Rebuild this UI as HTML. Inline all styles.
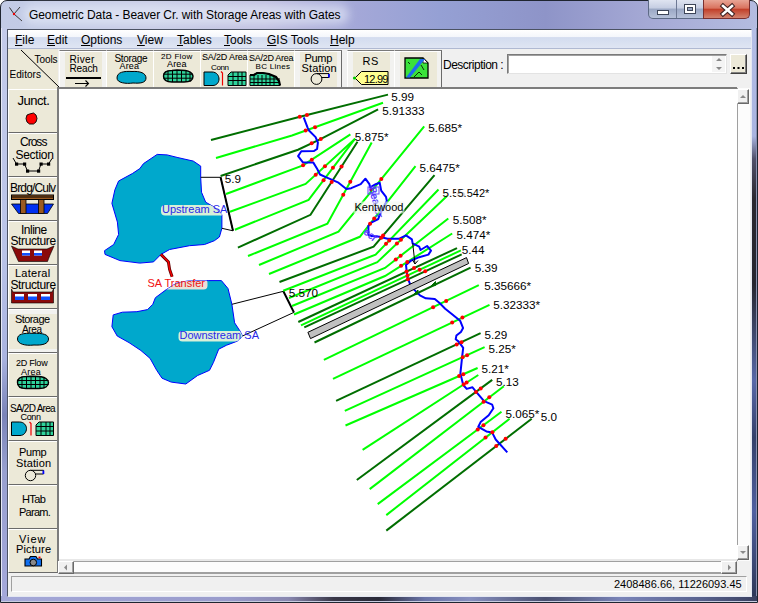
<!DOCTYPE html>
<html><head><meta charset="utf-8">
<style>
*{margin:0;padding:0;box-sizing:border-box}
html,body{width:758px;height:603px;overflow:hidden;background:#fff}
body{font-family:"Liberation Sans",sans-serif;position:relative}
.a{position:absolute}
#win{left:0;top:0;width:758px;height:603px;border:1px solid #1f2530;border-radius:7px 7px 0 0;
 background:linear-gradient(90deg,#c2cbe6 0%,#c8cde6 20%,#c0c0e0 35%,#a4a8d8 47%,#95a0d4 58%,#8e94c8 72%,#a4a8d4 85%,#b4bce0 100%);}
#title{left:29px;top:8px;letter-spacing:-0.07px;font-size:12px;color:#000;white-space:nowrap}
#client{left:7px;top:29px;width:745px;height:568px;background:#f0f0f0;border:1px solid #4b5263;border-bottom-color:#e4e8f2;border-right-color:#e4e8f2}
#menu{left:8px;top:30px;width:743px;height:19px;background:linear-gradient(#ffffff 0%,#f4f6fb 38%,#d3dcef 42%,#dfe5f3 100%);border-bottom:1px solid #b0b9d2}
.mi{position:absolute;top:33px;font-size:12px;color:#000}
#tbl{left:8px;top:49px;width:50px;height:39px;background:#ece9d8}
.tbtn{position:absolute;top:50px;height:38px;background:#ece9d8;border-top:1px solid #7a7a7a;border-left:1px solid #fff;border-right:1px solid #6a6a6a;border-bottom:1px solid #5a5a5a;box-shadow:inset 0 1px 0 #fff}
.lbtn{position:absolute;left:8px;width:50px;height:44px;background:#ece9d8;border-top:1px solid #fff;border-left:1px solid #fff;border-right:1px solid #7a7a7a;border-bottom:1px solid #6a6a6a}
.t{position:absolute;font-size:10px;line-height:10px;color:#000;white-space:nowrap;-webkit-text-stroke:0.05px #000}
.ic{position:absolute;overflow:visible}
#canvas{left:57px;top:87px;width:680px;height:473px;background:#fff;border-top:2px solid #7c7c7c;border-left:2px solid #7c7c7c}
</style></head><body>
<div id="win" class="a"></div>
<div class="a" style="left:1px;top:28px;width:6px;height:569px;background:linear-gradient(#c4cbea 0%,#b9c3e8 40%,#a9b3e0 58%,#7a84b8 68%,#98a0d0 78%,#a4a8da 100%);border-left:1px solid #e6e9f6"></div>
<div class="a" style="left:751px;top:28px;width:6px;height:569px;background:linear-gradient(#b4bee6 0%,#a9b4e0 19%,#50506a 23%,#2a2830 30%,#262630 45%,#3a4260 52%,#5868a8 62%,#34406a 72%,#5060a0 85%,#2e3858 100%);border-right:1px solid #8890b0"></div>
<div class="a" style="left:1px;top:596px;width:756px;height:6px;background:linear-gradient(90deg,#a4a8d8 0%,#9a9ccc 30%,#8a88b0 38%,#3a3848 44%,#2a2a38 50%,#6a74a8 56%,#8890c0 62%,#4a5070 72%,#7a84b8 82%,#5a6490 92%,#3a4060 100%);border-bottom:1px solid #c8cce0"></div>
<svg class="ic" style="left:8px;top:6px" width="16" height="16"><path d="M1.5 1.5 L6 8 L14 15 M12 1 L6 8" stroke="#333" stroke-width="1" fill="none"/><circle cx="6" cy="8" r="1.2" fill="#e00"/></svg>
<div class="a" style="left:24px;top:5px;width:325px;height:19px;background:rgba(235,240,252,0.55);filter:blur(4px);border-radius:9px"></div>
<div id="title" class="a">Geometric Data - Beaver Cr. with Storage Areas with Gates</div>
<!-- caption buttons -->
<div class="a" style="left:648px;top:0;width:56px;height:19px;border:1px solid #5d6a86;border-top:none;border-radius:0 0 0 5px;background:linear-gradient(#dfe4f1,#c5cde2 45%,#9aa7c4 50%,#b6c1d9 100%)"></div>
<div class="a" style="left:676px;top:0;width:1px;height:18px;background:#6d7894"></div>
<div class="a" style="left:657px;top:10px;width:12px;height:5px;background:#fff;border:1px solid #3d4558"></div>
<div class="a" style="left:684px;top:4px;width:12px;height:10px;background:#fff;border:1px solid #3d4558"></div>
<div class="a" style="left:687px;top:7px;width:6px;height:4px;background:#9aa7c4;border:1px solid #3d4558"></div>
<div class="a" style="left:703px;top:0;width:47px;height:19px;border:1px solid #7a3030;border-top:none;border-radius:0 0 5px 0;background:linear-gradient(#e8a595,#d9735f 45%,#c2402a 52%,#d3836f 100%)"></div>
<svg class="ic" style="left:720px;top:4px" width="15" height="12"><path d="M3 2 L12 10 M12 2 L3 10" stroke="#3d2020" stroke-width="4.6" stroke-linecap="square"/><path d="M3 2 L12 10 M12 2 L3 10" stroke="#fff" stroke-width="2.6" stroke-linecap="square"/></svg>

<div id="client" class="a"></div>
<div id="menu" class="a"></div>
<div class="mi" style="left:15px"><u>F</u>ile</div>
<div class="mi" style="left:47px"><u>E</u>dit</div>
<div class="mi" style="left:81px"><u>O</u>ptions</div>
<div class="mi" style="left:137px"><u>V</u>iew</div>
<div class="mi" style="left:177px"><u>T</u>ables</div>
<div class="mi" style="left:224px"><u>T</u>ools</div>
<div class="mi" style="left:267px"><u>G</u>IS Tools</div>
<div class="mi" style="left:330px"><u>H</u>elp</div>

<div id="tbl" class="a"></div>
<svg class="ic" style="left:8px;top:49px" width="52" height="40"><line x1="13" y1="1" x2="51" y2="38" stroke="#000" stroke-width="1"/></svg>
<!-- top toolbar buttons -->
<div class="tbtn" style="left:59px;width:48px;background:linear-gradient(90deg,#f2f2f0 0,#f2f2f0 5px,#ece9d8 5px,#ece9d8 42px,#f2f2f0 42px)"></div>
<svg class="ic" style="left:59px;top:50px" width="48" height="38"><rect x="7" y="27" width="35" height="2" fill="#000"/><path d="M16 33.5 H29.5 M26.5 30.5 L29.5 33.5 L26.5 36.5" stroke="#000" stroke-width="1.1" fill="none"/></svg>

<div class="tbtn" style="left:106px;width:48px"></div>
<svg class="ic" style="left:106px;top:50px" width="48" height="38"><path d="M11 28 C11 22,18 21,26 21.5 C34 21,40 23,40 28 C40 33,34 33.5,27 33 C20 34,11 33,11 28Z" fill="#00a8cc" stroke="#000" stroke-width="1"/></svg>

<div class="tbtn" style="left:153px;width:48px"></div>
<svg class="ic" style="left:153px;top:50px" width="48" height="38" id="g2d"><path d="M10.5 26 C10.5 22,14 20.5,19 20.5 L24 20 C30 20,34 20,37 22 C39.5 23.5,40 25,40 26.5 C40 30,37 32,31 32 L19 32 C13 32,10.5 30,10.5 26Z" fill="#2fd39b" stroke="#000" stroke-width="1.4"/><path d="M10.5 24.2H40 M10.5 28.2H40 M15 20.5V32 M19.5 20.5V32 M24 20V32 M28.5 20V32 M33 20V32 M37 21.5V32" stroke="#000" stroke-width="1"/></svg>

<div class="tbtn" style="left:200px;width:48px"></div>
<svg class="ic" style="left:200px;top:50px" width="48" height="38"><path d="M4 22 H12 C17 22,19 26,19 29 C19 33,16 35.5,13 35.5 H4Z" fill="#00a8cc" stroke="#000" stroke-width="1"/><path d="M21 21.5 L22.5 23 V35.5" stroke="#e00" stroke-width="1.2" fill="none"/><path d="M31 22 H46 V35.5 H28 V25Z" fill="#2fd39b" stroke="#000" stroke-width="1"/><path d="M28 26.5H46 M28 30.5H46 M33 22V35.5 M38 22V35.5 M42 22V35.5" stroke="#000" stroke-width="1"/></svg>

<div class="tbtn" style="left:247px;width:48px"></div>
<svg class="ic" style="left:247px;top:50px" width="48" height="38"><path d="M3 25 H7 L10 23 H16 L22 24 L29 27 L32 31 L33 35.5 H3Z" fill="#2fd39b" stroke="#000" stroke-width="1"/><path d="M3 25 H7 L10 23 H16 L22 24 L29 27 L32 31 L33 35.5" stroke="#000" stroke-width="2.2" fill="none"/><path d="M3 29H33 M3 32.5H33 M7 25V35.5 M11 25V35.5 M15 25V35.5 M19 25V35.5 M23 25V35.5 M27 27V35.5" stroke="#000" stroke-width="1"/></svg>

<div class="tbtn" style="left:294px;width:48px;background:linear-gradient(90deg,#f2f2f0 0,#f2f2f0 5px,#ece9d8 5px,#ece9d8 42px,#f2f2f0 42px)"></div>
<svg class="ic" style="left:294px;top:50px" width="48" height="38"><circle cx="22.5" cy="29" r="5.4" fill="none" stroke="#000" stroke-width="1"/><path d="M22.5 23.6 H35 V27.5 H27.5" fill="none" stroke="#000" stroke-width="1"/><rect x="34" y="24" width="1.8" height="3.5" fill="#00f"/></svg>

<div class="tbtn" style="left:347px;width:48px;background:linear-gradient(90deg,#f2f2f0 0,#f2f2f0 5px,#ece9d8 5px,#ece9d8 42px,#f2f2f0 42px)"></div>
<svg class="ic" style="left:347px;top:50px" width="48" height="38"><path d="M8 28 L14.5 21.5 H41 V34.5 H14.5Z" fill="#ffff90" stroke="#000" stroke-width="1"/><circle cx="7.5" cy="28" r="1.6" fill="#0c0"/><text x="17" y="33" font-family="Liberation Sans" font-size="11" letter-spacing="-0.8">12.99</text></svg>

<div class="tbtn" style="left:394px;width:48px;background:linear-gradient(90deg,#f2f2f0 0,#f2f2f0 5px,#ece9d8 5px,#ece9d8 42px,#f2f2f0 42px)"></div>
<svg class="ic" style="left:394px;top:50px" width="48" height="38"><path d="M11 8 H29 L34 13 V28 H11Z" fill="#3be23b" stroke="#000" stroke-width="1.3"/><path d="M29 8 V13 H34Z" fill="#fff" stroke="#000" stroke-width="0.8"/><path d="M12 27.5 L26 9 H31 L16 27.5Z" fill="#1e6cf0"/><path d="M20 27 L25 22 L28 25 M27 15 L30 20 M14 12 L16 14" stroke="#000" stroke-width="0.8" fill="none"/></svg>

<div class="a" style="left:443px;top:58px;font-size:12px;letter-spacing:-0.5px;white-space:nowrap">Description <span style="letter-spacing:0">:</span></div>
<div class="a" style="left:507px;top:54px;width:220px;height:20px;background:#fff;border:1px solid;border-color:#7a7a7a #e3e3e3 #e3e3e3 #7a7a7a;box-shadow:inset 1px 1px 0 #a0a0a0"></div>
<div class="a" style="left:712px;top:56px;width:13px;height:16px;background:#f4f4f4"></div>
<svg class="ic" style="left:712px;top:55px" width="14" height="18"><path d="M4 6 L7 3 L10 6Z M4 12 L7 15 L10 12Z" fill="#888"/></svg>
<div class="a" style="left:730px;top:54px;width:17px;height:20px;background:#ece9d8;border:1px solid;border-color:#fff #404040 #404040 #fff;box-shadow:inset -1px -1px 0 #808080"></div>
<svg class="ic" style="left:730px;top:54px" width="17" height="20"><rect x="3" y="13" width="2" height="2" fill="#000"/><rect x="7.5" y="13" width="2" height="2" fill="#000"/><rect x="12" y="13" width="2" height="2" fill="#000"/></svg>
<!-- left toolbar -->
<div class="a" style="left:8px;top:88px;width:50px;height:485px;background:#ece9d8"></div>
<div class="a" style="left:57px;top:88px;width:2px;height:485px;background:#7a7a7a"></div><div class="a" style="left:8px;top:572px;width:51px;height:1px;background:#6a6a6a"></div>
<div class="lbtn" style="top:89px"></div>
<svg class="ic" style="left:8px;top:89px" width="50" height="44"><path d="M21.5 25 L25.5 24 L28 26 L29 29.5 L28 33 L25.5 35 L21.5 35 L19 33 L18 29.5 L19 26Z" fill="#f00" stroke="#000" stroke-width="0.9"/></svg>

<div class="lbtn" style="top:133px"></div>
<svg class="ic" style="left:8px;top:133px" width="50" height="44"><path d="M5 25 L8.5 31 L16.5 31 L19.5 38 L30.5 38 L33 31 L40.5 31 L44 25.5" stroke="#000" stroke-width="1" fill="none"/><g fill="#000"><rect x="7" y="29.5" width="3.2" height="3.2"/><rect x="15" y="29.5" width="3.2" height="3.2"/><rect x="18" y="36.5" width="3.2" height="3.2"/><rect x="29" y="36.5" width="3.2" height="3.2"/><rect x="31.5" y="29.5" width="3.2" height="3.2"/><rect x="39" y="29.5" width="3.2" height="3.2"/></g></svg>

<div class="lbtn" style="top:177px"></div>
<svg class="ic" style="left:8px;top:177px" width="50" height="44"><path d="M3.5 27 H45.5 L39.5 36.5 H10.5Z" fill="#0030f0" stroke="#000" stroke-width="0.8"/><rect x="3.5" y="18" width="42" height="4.5" fill="#9a5a20" stroke="#000" stroke-width="1"/><line x1="3.5" y1="20" x2="45.5" y2="20" stroke="#000" stroke-width="1"/><rect x="12.5" y="22.5" width="5.5" height="14" fill="#9a5a20" stroke="#000" stroke-width="0.8"/><rect x="30.5" y="22.5" width="5.5" height="14" fill="#9a5a20" stroke="#000" stroke-width="0.8"/></svg>

<div class="lbtn" style="top:221px"></div>
<svg class="ic" style="left:8px;top:221px" width="50" height="44"><path d="M3.5 25 L10 28 H39 L46 25 L42 34 L39.5 40.5 H10.5 L7.5 34Z" fill="#8a0a0a" stroke="#000" stroke-width="0.6"/><rect x="14" y="29.5" width="8" height="5" fill="#fff"/><rect x="14" y="32" width="8" height="2.5" fill="#1050ff"/><rect x="26" y="29.5" width="8" height="5" fill="#fff"/><rect x="26" y="32" width="8" height="2.5" fill="#1050ff"/></svg>

<div class="lbtn" style="top:265px"></div>
<svg class="ic" style="left:8px;top:265px" width="50" height="44"><path d="M3.5 24 V38 H45.5 V24 L44 27 H5Z" fill="#8a0a0a" stroke="#000" stroke-width="0.6"/><rect x="7" y="29" width="9" height="6" fill="#fff"/><rect x="7" y="31.5" width="9" height="3.5" fill="#1050ff"/><rect x="20" y="29" width="9" height="6" fill="#fff"/><rect x="20" y="31.5" width="9" height="3.5" fill="#1050ff"/><rect x="33" y="29" width="9" height="6" fill="#fff"/><rect x="33" y="31.5" width="9" height="3.5" fill="#1050ff"/></svg>

<div class="lbtn" style="top:309px;background:linear-gradient(#f2f2f0 0,#f2f2f0 4px,#ece9d8 4px,#ece9d8 39px,#f2f2f0 39px)"></div>
<svg class="ic" style="left:8px;top:309px" width="50" height="44"><path d="M9.5 30 C9.5 25,15 24,25 24.3 C35 24,40.5 25.5,40.5 30 C40.5 35,34 36.5,26 36 C17 37,9.5 35,9.5 30Z" fill="#00a8cc" stroke="#000" stroke-width="1"/></svg>

<div class="lbtn" style="top:353px"></div>
<svg class="ic" style="left:8px;top:353px" width="50" height="44"><path d="M9.5 29.5 C9.5 25.5,13 23.5,18 23.5 L25 23.3 C31 23.3,35 23.5,38 25.5 C40 27,40.5 28,40.5 29.5 C40.5 33,37 35.5,31 35.5 L18 35.5 C12 35.5,9.5 33.5,9.5 29.5Z" fill="#2fd39b" stroke="#000" stroke-width="1.4"/><path d="M9.5 27.5H40.5 M9.5 31.5H40.5 M14 23.5V35.5 M18.5 23.5V35.5 M23 23.3V35.5 M27.5 23.3V35.5 M32 23.3V35.5 M36 24.5V35.5" stroke="#000" stroke-width="1"/></svg>

<div class="lbtn" style="top:397px"></div>
<svg class="ic" style="left:8px;top:397px" width="50" height="44"><path d="M3.5 25 H11.5 C16 25,18.5 28.5,18.5 31.5 C18.5 35,16 38.5,12 38.5 H3.5Z" fill="#00a8cc" stroke="#000" stroke-width="1"/><path d="M21.5 25 L23 26.5 V38.5" stroke="#e00" stroke-width="1.2" fill="none"/><path d="M31 25 H45.5 V38.5 H28 V28Z" fill="#2fd39b" stroke="#000" stroke-width="1"/><path d="M28 29.5H45.5 M28 34H45.5 M33 25V38.5 M38 25V38.5 M42 25V38.5" stroke="#000" stroke-width="1"/></svg>

<div class="lbtn" style="top:441px"></div>
<svg class="ic" style="left:8px;top:441px" width="50" height="44"><circle cx="22.5" cy="34.5" r="5.2" fill="none" stroke="#000" stroke-width="1"/><path d="M22.5 29.3 H35.5 V33 H27.3" fill="none" stroke="#000" stroke-width="1"/><rect x="34.5" y="29.5" width="1.8" height="3.5" fill="#00f"/></svg>

<div class="lbtn" style="top:485px"></div>

<div class="lbtn" style="top:529px"></div>
<svg class="ic" style="left:8px;top:529px" width="50" height="44"><path d="M17 30 H21 L22.5 27.5 H28 L29.5 30 H33.5 V37 H17Z" fill="#1070f0" stroke="#000" stroke-width="1.1"/><circle cx="25.3" cy="33.5" r="3.3" fill="#888" stroke="#000" stroke-width="1"/><rect x="30.5" y="27.6" width="2" height="1.6" fill="#f00"/></svg>
<!-- canvas & scrollbars -->
<div id="canvas" class="a"></div>
<div class="a" style="left:737px;top:88px;width:13px;height:473px;background:#fcfcfc;border-left:1px solid #a0a0a0"></div>
<div class="a" style="left:737px;top:89px;width:12px;height:15px;background:#f0f0f0;border:1px solid;border-color:#fff #696969 #696969 #fff;box-shadow:inset -1px -1px 0 #a0a0a0"></div>
<svg class="ic" style="left:737px;top:89px" width="12" height="15"><path d="M3 9 L6 6 L9 9Z" fill="#8a8a8a"/></svg>
<div class="a" style="left:737px;top:545px;width:12px;height:15px;background:#f0f0f0;border:1px solid;border-color:#fff #696969 #696969 #fff;box-shadow:inset -1px -1px 0 #a0a0a0"></div>
<svg class="ic" style="left:737px;top:545px" width="12" height="15"><path d="M3 6 L6 9 L9 6Z" fill="#8a8a8a"/></svg>
<div class="a" style="left:59px;top:559px;width:678px;height:15px;background:#fcfcfc;border-top:2px solid #e8e8e8;border-bottom:2px solid #a0a0a0;box-shadow:inset 0 1px 0 #a0a0a0"></div>
<div class="a" style="left:58px;top:561px;width:16px;height:13px;background:#f0f0f0;border:1px solid;border-color:#fff #696969 #696969 #fff;box-shadow:inset -1px -1px 0 #a0a0a0"></div>
<svg class="ic" style="left:58px;top:561px" width="16" height="13"><path d="M9 3.5 L6 6.5 L9 9.5Z" fill="#8a8a8a"/></svg>
<div class="a" style="left:721px;top:561px;width:16px;height:13px;background:#f0f0f0;border:1px solid;border-color:#fff #696969 #696969 #fff;box-shadow:inset -1px -1px 0 #a0a0a0"></div>
<svg class="ic" style="left:721px;top:561px" width="16" height="13"><path d="M7 3.5 L10 6.5 L7 9.5Z" fill="#8a8a8a"/></svg>
<div class="a" style="left:737px;top:561px;width:13px;height:13px;background:#f0f0f0"></div>
<div class="a" style="left:8px;top:574px;width:742px;height:22px;background:#f0f0f0"></div>
<div class="a" style="left:11px;top:576px;width:736px;height:16px;border:1px solid;border-color:#a0a0a0 #fff #fff #a0a0a0;background:#f0f0f0"></div>
<div class="a" style="left:614px;top:578px;font-size:11px;white-space:nowrap">2408486.66, 11226093.45</div>

<div class="t" style="left:17.5px;top:93.5px;font-size:13px;line-height:13px;letter-spacing:-0.46px">Junct.</div>
<div class="t" style="left:20.0px;top:136.0px;font-size:12px;line-height:12px;letter-spacing:-0.99px">Cross</div>
<div class="t" style="left:15.5px;top:148.5px;font-size:12px;line-height:12px;letter-spacing:-0.28px">Section</div>
<div class="t" style="left:10.0px;top:182.0px;font-size:12px;line-height:12px;letter-spacing:-0.83px">Brdg/Culv</div>
<div class="t" style="left:21.0px;top:223.5px;font-size:12px;line-height:12px;letter-spacing:-0.5px">Inline</div>
<div class="t" style="left:10.5px;top:234.5px;font-size:12px;line-height:12px;letter-spacing:-0.38px">Structure</div>
<div class="t" style="left:15.0px;top:268.0px;font-size:11px;line-height:11px;letter-spacing:0.25px">Lateral</div>
<div class="t" style="left:10.5px;top:278.5px;font-size:12px;line-height:12px;letter-spacing:-0.38px">Structure</div>
<div class="t" style="left:15.0px;top:314.0px;font-size:11px;line-height:11px;letter-spacing:-0.58px">Storage</div>
<div class="t" style="left:22.0px;top:324.5px;font-size:10px;line-height:10px;letter-spacing:-0.33px">Area</div>
<div class="t" style="left:16.0px;top:359.0px;font-size:9px;line-height:9px;letter-spacing:-0.23px">2D Flow</div>
<div class="t" style="left:21.0px;top:367.5px;font-size:9px;line-height:9px;letter-spacing:0.24px">Area</div>
<div class="t" style="left:10.0px;top:403.5px;font-size:10px;line-height:10px;letter-spacing:-0.75px">SA/2D Area</div>
<div class="t" style="left:20.5px;top:413.0px;font-size:9px;line-height:9px;letter-spacing:-0.33px">Conn</div>
<div class="t" style="left:19.0px;top:446.5px;font-size:11px;line-height:11px;letter-spacing:-0.39px">Pump</div>
<div class="t" style="left:16.0px;top:457.5px;font-size:11px;line-height:11px;letter-spacing:0.13px">Station</div>
<div class="t" style="left:22.0px;top:494.0px;font-size:11px;line-height:11px;letter-spacing:-0.57px">HTab</div>
<div class="t" style="left:19.0px;top:507.0px;font-size:11px;line-height:11px;letter-spacing:-0.72px">Param.</div>
<div class="t" style="left:19.0px;top:533.5px;font-size:11px;line-height:11px;letter-spacing:0.94px">View</div>
<div class="t" style="left:16.0px;top:544.0px;font-size:11px;line-height:11px;letter-spacing:0.13px">Picture</div>
<div class="t" style="left:69.5px;top:55.0px;font-size:10px;line-height:10px;letter-spacing:0.39px">River</div>
<div class="t" style="left:69.5px;top:64.0px;font-size:10px;line-height:10px;letter-spacing:-0.15px">Reach</div>
<div class="t" style="left:114.5px;top:53.5px;font-size:10px;line-height:10px;letter-spacing:-0.33px">Storage</div>
<div class="t" style="left:119.5px;top:62.0px;font-size:9px;line-height:9px;letter-spacing:0.16px">Area</div>
<div class="t" style="left:161.0px;top:52.5px;font-size:8px;line-height:8px;letter-spacing:0.31px">2D Flow</div>
<div class="t" style="left:167.0px;top:60.0px;font-size:9px;line-height:9px;letter-spacing:0.13px">Area</div>
<div class="t" style="left:202.0px;top:52.5px;font-size:9px;line-height:9px;letter-spacing:-0.16px">SA/2D Area</div>
<div class="t" style="left:211.0px;top:63.5px;font-size:8px;line-height:8px;letter-spacing:-0.4px">Conn</div>
<div class="t" style="left:249.0px;top:53.5px;font-size:9px;line-height:9px;letter-spacing:-0.28px">SA/2D Area</div>
<div class="t" style="left:255.5px;top:63.0px;font-size:8px;line-height:8px;letter-spacing:0.3px">BC Lines</div>
<div class="t" style="left:304.5px;top:52.5px;font-size:11px;line-height:11px;letter-spacing:-0.3px">Pump</div>
<div class="t" style="left:301.5px;top:63.0px;font-size:11px;line-height:11px;letter-spacing:0.15px">Station</div>
<div class="t" style="left:362.5px;top:56.0px;font-size:11px;line-height:11px;letter-spacing:0.6px">RS</div>
<div class="t" style="left:34.5px;top:54.5px;font-size:10px;line-height:10px;letter-spacing:-0.06px">Tools</div>
<div class="t" style="left:9.5px;top:70.0px;font-size:10px;line-height:10px;letter-spacing:0.06px">Editors</div>
<svg class="ic" style="left:59px;top:89px" width="678" height="471" viewBox="59 89 678 471">
<defs><clipPath id="cup"><polygon points="157.2,154.4 167.1,154.9 177.1,157.4 193.3,161.1 200.7,166.1 200.7,177.3 201.5,192.2 205.7,202.2 214.4,207.2 221.9,214.6 221.9,228.3 219.4,237.0 214.4,240.7 204.5,244.5 189.5,245.7 169.6,249.5 160.9,254.4 153.5,261.9 139.8,263.1 119.9,260.6 105.0,254.4 104.5,250.7 113.7,244.5 118.6,234.5 117.4,222.1 111.9,203.4 114.9,189.8 118.6,181.0 132.3,173.6 139.8,168.6 143.5,163.6"/></clipPath><clipPath id="cdn"><polygon points="208.2,280.6 221.4,280.6 228.0,288.5 231.9,304.3 234.6,322.8 239.8,330.7 242.5,336.0 237.2,341.2 226.6,345.2 218.7,349.2 213.5,362.3 209.5,370.3 197.6,375.5 185.8,384.0 171.2,382.1 162.0,378.2 156.7,370.3 150.1,358.4 140.9,350.5 129.0,342.6 117.2,336.0 111.9,326.7 113.2,314.9 122.4,312.2 136.9,311.7 147.5,309.6 152.8,304.3 155.4,297.7 166.0,289.8 176.5,283.2 187.1,281.1"/></clipPath></defs>
<polygon points="157.2,154.4 167.1,154.9 177.1,157.4 193.3,161.1 200.7,166.1 200.7,177.3 201.5,192.2 205.7,202.2 214.4,207.2 221.9,214.6 221.9,228.3 219.4,237.0 214.4,240.7 204.5,244.5 189.5,245.7 169.6,249.5 160.9,254.4 153.5,261.9 139.8,263.1 119.9,260.6 105.0,254.4 104.5,250.7 113.7,244.5 118.6,234.5 117.4,222.1 111.9,203.4 114.9,189.8 118.6,181.0 132.3,173.6 139.8,168.6 143.5,163.6" fill="#00a8cc" stroke="#0000ff" stroke-width="1"/>
<polygon points="208.2,280.6 221.4,280.6 228.0,288.5 231.9,304.3 234.6,322.8 239.8,330.7 242.5,336.0 237.2,341.2 226.6,345.2 218.7,349.2 213.5,362.3 209.5,370.3 197.6,375.5 185.8,384.0 171.2,382.1 162.0,378.2 156.7,370.3 150.1,358.4 140.9,350.5 129.0,342.6 117.2,336.0 111.9,326.7 113.2,314.9 122.4,312.2 136.9,311.7 147.5,309.6 152.8,304.3 155.4,297.7 166.0,289.8 176.5,283.2 187.1,281.1" fill="#00a8cc" stroke="#0000ff" stroke-width="1"/>
<path d="M200.7 177.3 H220.6 L233 230.8 L221.9 228.3" fill="none" stroke="#000" stroke-width="1"/>
<path d="M220.6 177.3 L233 230.8" fill="none" stroke="#000" stroke-width="2"/>
<path d="M231.9 304.3 L283.4 291.3 L293.9 312.4 L242.5 336" fill="none" stroke="#000" stroke-width="1"/>
<path d="M283.4 291.3 L293.9 312.4" fill="none" stroke="#000" stroke-width="2"/>
<polyline points="160.9,254.4 168.4,261.9 169.6,269.4 172.1,276.8" fill="none" stroke="#600" stroke-width="3"/>
<polyline points="160.9,254.4 168.4,261.9 169.6,269.4 172.1,276.8" fill="none" stroke="#f00" stroke-width="1.3"/>
<polyline points="211.0,140.0 300.0,116.8 388.0,94.6" fill="none" stroke="#006e00" stroke-width="2"/>
<polyline points="216.0,158.0 292.0,135.5 383.0,102.7" fill="none" stroke="#00ff00" stroke-width="2"/>
<polyline points="220.6,176.0 298.0,149.7 320.0,139.4 378.1,109.4" fill="none" stroke="#006e00" stroke-width="2"/>
<polyline points="226.0,194.0 303.0,165.4 350.4,134.4" fill="none" stroke="#00ff00" stroke-width="2"/>
<polyline points="230.0,211.8 305.6,183.9 355.1,138.7" fill="none" stroke="#00ff00" stroke-width="2"/>
<polyline points="234.9,229.7 308.6,199.9 355.1,138.7" fill="none" stroke="#00ff00" stroke-width="2"/>
<polyline points="237.9,247.6 310.5,214.8 357.5,141.8" fill="none" stroke="#006e00" stroke-width="2"/>
<polyline points="248.0,256.0 327.4,223.8 371.7,142.6" fill="none" stroke="#00ff00" stroke-width="2"/>
<polyline points="259.0,265.0 338.5,231.7 424.2,126.3" fill="none" stroke="#00ff00" stroke-width="2"/>
<polyline points="269.0,274.0 359.8,236.8 415.5,166.2" fill="none" stroke="#00ff00" stroke-width="2"/>
<polyline points="279.5,282.0 373.6,246.7 434.5,175.2" fill="none" stroke="#006e00" stroke-width="2"/>
<polyline points="283.2,290.8 375.6,254.6 438.5,189.5" fill="none" stroke="#00ff00" stroke-width="2"/>
<polyline points="289.0,298.0 377.3,262.2 447.0,196.0" fill="none" stroke="#00ff00" stroke-width="2"/>
<polyline points="292.0,306.0 385.0,268.0 448.3,218.5" fill="none" stroke="#00ff00" stroke-width="2"/>
<polyline points="294.0,314.5 385.0,276.0 452.2,233.5" fill="none" stroke="#00ff00" stroke-width="2"/>
<polyline points="298.3,322.0 457.0,248.1" fill="none" stroke="#006e00" stroke-width="2"/>
<polyline points="301.0,325.3 460.9,250.4" fill="none" stroke="#00ff00" stroke-width="2"/>
<polyline points="304.3,327.4 461.7,254.4" fill="none" stroke="#006e00" stroke-width="2"/>
<polyline points="314.5,342.5 470.6,267.7" fill="none" stroke="#006e00" stroke-width="2"/>
<polyline points="323.9,359.8 478.8,285.2" fill="none" stroke="#00ff00" stroke-width="2"/>
<polyline points="333.0,378.8 489.5,304.8" fill="none" stroke="#00ff00" stroke-width="2"/>
<polyline points="336.1,400.9 480.6,333.2" fill="none" stroke="#006e00" stroke-width="2"/>
<polyline points="344.8,410.9 484.6,347.2" fill="none" stroke="#00ff00" stroke-width="2"/>
<polyline points="345.5,425.5 477.6,368.0" fill="none" stroke="#00ff00" stroke-width="2"/>
<polyline points="362.6,449.9 478.3,375.0" fill="none" stroke="#00ff00" stroke-width="2"/>
<polyline points="356.8,480.0 492.2,379.9" fill="none" stroke="#006e00" stroke-width="2"/>
<polyline points="369.7,489.1 503.8,386.2" fill="none" stroke="#00ff00" stroke-width="2"/>
<polyline points="377.7,504.1 501.5,411.7" fill="none" stroke="#00ff00" stroke-width="2"/>
<polyline points="386.3,515.1 509.6,418.7" fill="none" stroke="#00ff00" stroke-width="2"/>
<polyline points="386.3,530.6 531.7,418.7" fill="none" stroke="#006e00" stroke-width="2"/>
<polyline points="303.7,117.3 307.6,127.6 309.2,130.7 315.6,137.1 317.9,142.6 317.1,148.9 314.0,151.0 301.3,151.3 298.1,156.1 302.9,162.4 313.2,162.4 317.1,168.7 320.0,174.5 325.8,177.1 338.5,182.7 346.4,189.0 351.2,188.2 360.7,184.2 365.4,178.7 369.4,184.2 370.2,187.4 375.7,184.2 379.7,182.7 381.2,190.6 386.0,196.9 386.8,200.9 382.0,210.0 379.6,215.0 378.3,219.0 371.7,222.3 368.4,225.6 368.4,234.8 371.7,236.1 379.6,236.8 387.5,238.7 399.4,238.7 406.0,235.4 411.9,239.4 412.6,243.4 419.2,246.7 420.5,250.0 427.1,246.0 431.0,250.6 428.4,254.6 419.2,257.2 411.2,260.5 406.0,265.1 406.6,270.4 407.3,277.0 409.9,283.6 414.6,290.1 419.9,295.3 425.8,298.3 434.8,299.0 439.3,302.8 445.2,308.7 452.7,314.7 460.1,320.7 463.1,328.1 460.9,331.9 456.4,335.6 455.7,339.3 458.7,341.6 463.2,347.9 462.1,357.1 460.4,373.4 463.2,385.0 466.7,388.9 472.5,387.3 478.3,394.3 484.1,401.2 492.2,404.7 493.4,408.2 488.7,415.2 480.6,422.1 478.3,426.8 486.4,431.4 492.2,432.6 495.7,439.5 507.3,452.3" fill="none" stroke="#0000ff" stroke-width="2" stroke-linejoin="round"/>
<polygon points="307.9,332.3 466.5,257.6 468.6,263.5 310.5,338.6" fill="#c0c0c0" stroke="#000" stroke-width="1"/>
<path d="M431 286 L435.5 281.5 L435.5 285.5Z M413.5 294.5 L418 290 L418 294Z" fill="#006e00" stroke="#006e00" stroke-width="1"/>
<path d="M412.7 243.3 L415 263.9 M412.5 260 L415 264 L418 260.5" fill="none" stroke="#000" stroke-width="1"/>
<circle cx="299.7190882396054" cy="116.87322643641745" r="2" fill="#ff0000"/>
<circle cx="306.93778682115953" cy="115.04978559738929" r="2" fill="#ff0000"/>
<circle cx="305.6559714604503" cy="130.5778476494201" r="2" fill="#ff0000"/>
<circle cx="315.0494483180219" cy="127.19206697987782" r="2" fill="#ff0000"/>
<circle cx="311.623006660001" cy="143.3219559728177" r="2" fill="#ff0000"/>
<circle cx="320.79466742757177" cy="138.9896725847306" r="2" fill="#ff0000"/>
<circle cx="303.0673815996209" cy="165.35593186522684" r="2" fill="#ff0000"/>
<circle cx="311.79654961717836" cy="159.64698231787915" r="2" fill="#ff0000"/>
<circle cx="324.9405489073708" cy="166.23953917953216" r="2" fill="#ff0000"/>
<circle cx="332.9453024786338" cy="167.85844060876587" r="2" fill="#ff0000"/>
<circle cx="341.5363358981162" cy="166.59462722207482" r="2" fill="#ff0000"/>
<circle cx="315.7409512851385" cy="174.63997983660082" r="2" fill="#ff0000"/>
<circle cx="323.5528800597188" cy="180.22008043753144" r="2" fill="#ff0000"/>
<circle cx="331.68055187052266" cy="181.9025470947201" r="2" fill="#ff0000"/>
<circle cx="350.3029663636799" cy="181.8198449496431" r="2" fill="#ff0000"/>
<circle cx="343.27383054793575" cy="194.70394942455115" r="2" fill="#ff0000"/>
<circle cx="381.31774694979043" cy="179.03966711192635" r="2" fill="#ff0000"/>
<circle cx="374.20058020119086" cy="218.5471999604296" r="2" fill="#ff0000"/>
<circle cx="370.08874605068723" cy="223.7589682014629" r="2" fill="#ff0000"/>
<circle cx="383.0900761359746" cy="235.5581207927392" r="2" fill="#ff0000"/>
<circle cx="381.2619148945818" cy="237.7044841549655" r="2" fill="#ff0000"/>
<circle cx="389.27901254756284" cy="240.4425482218388" r="2" fill="#ff0000"/>
<circle cx="386.03668911283535" cy="243.79827565587317" r="2" fill="#ff0000"/>
<circle cx="400.9686567761806" cy="239.7198697477309" r="2" fill="#ff0000"/>
<circle cx="396.9209332148697" cy="243.56433602834468" r="2" fill="#ff0000"/>
<circle cx="400.6345747498118" cy="255.77391074066847" r="2" fill="#ff0000"/>
<circle cx="395.7985086276587" cy="259.55566860870294" r="2" fill="#ff0000"/>
<circle cx="407.27336845884827" cy="261.91342024552006" r="2" fill="#ff0000"/>
<circle cx="401.0902486361314" cy="265.8238754905419" r="2" fill="#ff0000"/>
<circle cx="406.5543422336354" cy="271.5904480714199" r="2" fill="#ff0000"/>
<circle cx="414.04154547441993" cy="268.10396842747554" r="2" fill="#ff0000"/>
<circle cx="419.63523074909824" cy="269.72915082484394" r="2" fill="#ff0000"/>
<circle cx="425.2048061770357" cy="271.32597934610163" r="2" fill="#ff0000"/>
<circle cx="407.4948292418826" cy="275.4159305177173" r="2" fill="#ff0000"/>
<circle cx="407.8815704084805" cy="279.3602627711621" r="2" fill="#ff0000"/>
<circle cx="446.19410172883744" cy="300.903034286822" r="2" fill="#ff0000"/>
<circle cx="433.10059673529395" cy="307.2088798163142" r="2" fill="#ff0000"/>
<circle cx="462.42188232546107" cy="317.6037105937117" r="2" fill="#ff0000"/>
<circle cx="452.1623609987236" cy="322.45485805811154" r="2" fill="#ff0000"/>
<circle cx="456.68579404120555" cy="344.4040951101065" r="2" fill="#ff0000"/>
<circle cx="461.52609806020683" cy="342.1363540576055" r="2" fill="#ff0000"/>
<circle cx="462.64791479268683" cy="357.2024880379531" r="2" fill="#ff0000"/>
<circle cx="467.06076927411675" cy="355.19176678997684" r="2" fill="#ff0000"/>
<circle cx="459.144964315068" cy="376.03303975687805" r="2" fill="#ff0000"/>
<circle cx="463.33465918890613" cy="374.20936484964346" r="2" fill="#ff0000"/>
<circle cx="463.6448696865212" cy="384.4872019056142" r="2" fill="#ff0000"/>
<circle cx="466.6341949306451" cy="382.5520207406628" r="2" fill="#ff0000"/>
<circle cx="475.9776939932995" cy="391.89300466226524" r="2" fill="#ff0000"/>
<circle cx="480.70943072679347" cy="388.39487432974863" r="2" fill="#ff0000"/>
<circle cx="483.5941941926176" cy="401.70467872915475" r="2" fill="#ff0000"/>
<circle cx="489.27318290923523" cy="397.34697597792467" r="2" fill="#ff0000"/>
<circle cx="483.4188357455938" cy="425.19515005740817" r="2" fill="#ff0000"/>
<circle cx="477.72856563387836" cy="429.442169106863" r="2" fill="#ff0000"/>
<circle cx="492.3982460294295" cy="432.1488976704217" r="2" fill="#ff0000"/>
<circle cx="485.54190660867044" cy="437.50940959387" r="2" fill="#ff0000"/>
<circle cx="505.65169904318634" cy="438.74680108024387" r="2" fill="#ff0000"/>
<circle cx="496.2343898912656" cy="445.9943725664882" r="2" fill="#ff0000"/>
<text x="391.2" y="100.8" font-family="Liberation Sans" font-size="11.7" fill="#000">5.99</text>
<text x="382.2" y="115.3" font-family="Liberation Sans" font-size="11.7" fill="#000">5.91333</text>
<text x="354.7" y="140.60000000000002" font-family="Liberation Sans" font-size="11.7" fill="#000">5.875*</text>
<text x="428.2" y="132.10000000000002" font-family="Liberation Sans" font-size="11.7" fill="#000">5.685*</text>
<text x="419.5" y="172.10000000000002" font-family="Liberation Sans" font-size="11.7" fill="#000">5.6475*</text>
<text x="442.4" y="196.60000000000002" font-family="Liberation Sans" font-size="11.7" fill="#000">5.55</text>
<text x="452.7" y="224.3" font-family="Liberation Sans" font-size="11.7" fill="#000">5.508*</text>
<text x="456.5" y="239.3" font-family="Liberation Sans" font-size="11.7" fill="#000">5.474*</text>
<text x="461.7" y="253.9" font-family="Liberation Sans" font-size="11.7" fill="#000">5.44</text>
<text x="474.7" y="272.3" font-family="Liberation Sans" font-size="11.7" fill="#000">5.39</text>
<text x="484.2" y="289.8" font-family="Liberation Sans" font-size="11.7" fill="#000">5.35666*</text>
<text x="493.2" y="308.8" font-family="Liberation Sans" font-size="11.7" fill="#000">5.32333*</text>
<text x="484.5" y="338.90000000000003" font-family="Liberation Sans" font-size="11.7" fill="#000">5.29</text>
<text x="488.4" y="352.8" font-family="Liberation Sans" font-size="11.7" fill="#000">5.25*</text>
<text x="481.4" y="373.3" font-family="Liberation Sans" font-size="11.7" fill="#000">5.21*</text>
<text x="496.09999999999997" y="385.8" font-family="Liberation Sans" font-size="11.7" fill="#000">5.13</text>
<text x="505.4" y="417.8" font-family="Liberation Sans" font-size="11.7" fill="#000">5.065*</text>
<text x="540.7" y="421.3" font-family="Liberation Sans" font-size="11.7" fill="#000">5.0</text>
<text x="224.79999999999998" y="182.8" font-family="Liberation Sans" font-size="11.7" fill="#000">5.9</text>
<text x="288.8" y="297.0" font-family="Liberation Sans" font-size="11.7" fill="#000">5.570</text>
<rect x="456" y="187.5" width="33" height="11" fill="#fff" opacity="0.8"/>
<text x="457.5" y="196.5" font-family="Liberation Sans" font-size="11" fill="#000">5.542*</text>
<rect x="161" y="205" width="65" height="10.5" rx="4" fill="#d8f0d8" clip-path="url(#cup)"/>
<text x="162" y="213.0" font-family="Liberation Sans" font-size="11" fill="#2828e8">Upstream SA</text>
<rect x="146.5" y="279" width="61" height="10.5" rx="4" fill="#e8e0d8" clip-path="url(#cdn)"/>
<text x="147.5" y="287.0" font-family="Liberation Sans" font-size="11" fill="#f01010">SA Transfer</text>
<rect x="178.5" y="331" width="80" height="10.5" rx="4" fill="#d8f0d8" clip-path="url(#cdn)"/>
<text x="179.5" y="339.0" font-family="Liberation Sans" font-size="11" fill="#2828e8">Downstream SA</text>
<rect x="368" y="187" width="11" height="7" fill="none" stroke="#6040ff" stroke-width="1"/><circle cx="371" cy="189.5" r="1.5" fill="#f00"/>
<text x="0" y="0" font-family="Liberation Sans" font-size="10" fill="#4a2cff" stroke="#4a2cff" stroke-width="0.3" transform="translate(369,188) rotate(76)">Bea Cr</text>
<text x="0" y="0" font-family="Liberation Sans" font-size="10" fill="#5a2cff" stroke="#5a2cff" stroke-width="0.3" transform="translate(363,233) rotate(40)">ecf</text>
<rect x="353.5" y="201.5" width="51" height="12" fill="#f4f6f2" opacity="0.6"/>
<text x="354.5" y="211" font-family="Liberation Sans" font-size="11" fill="#000">Kentwood</text>
</svg>
</body></html>
